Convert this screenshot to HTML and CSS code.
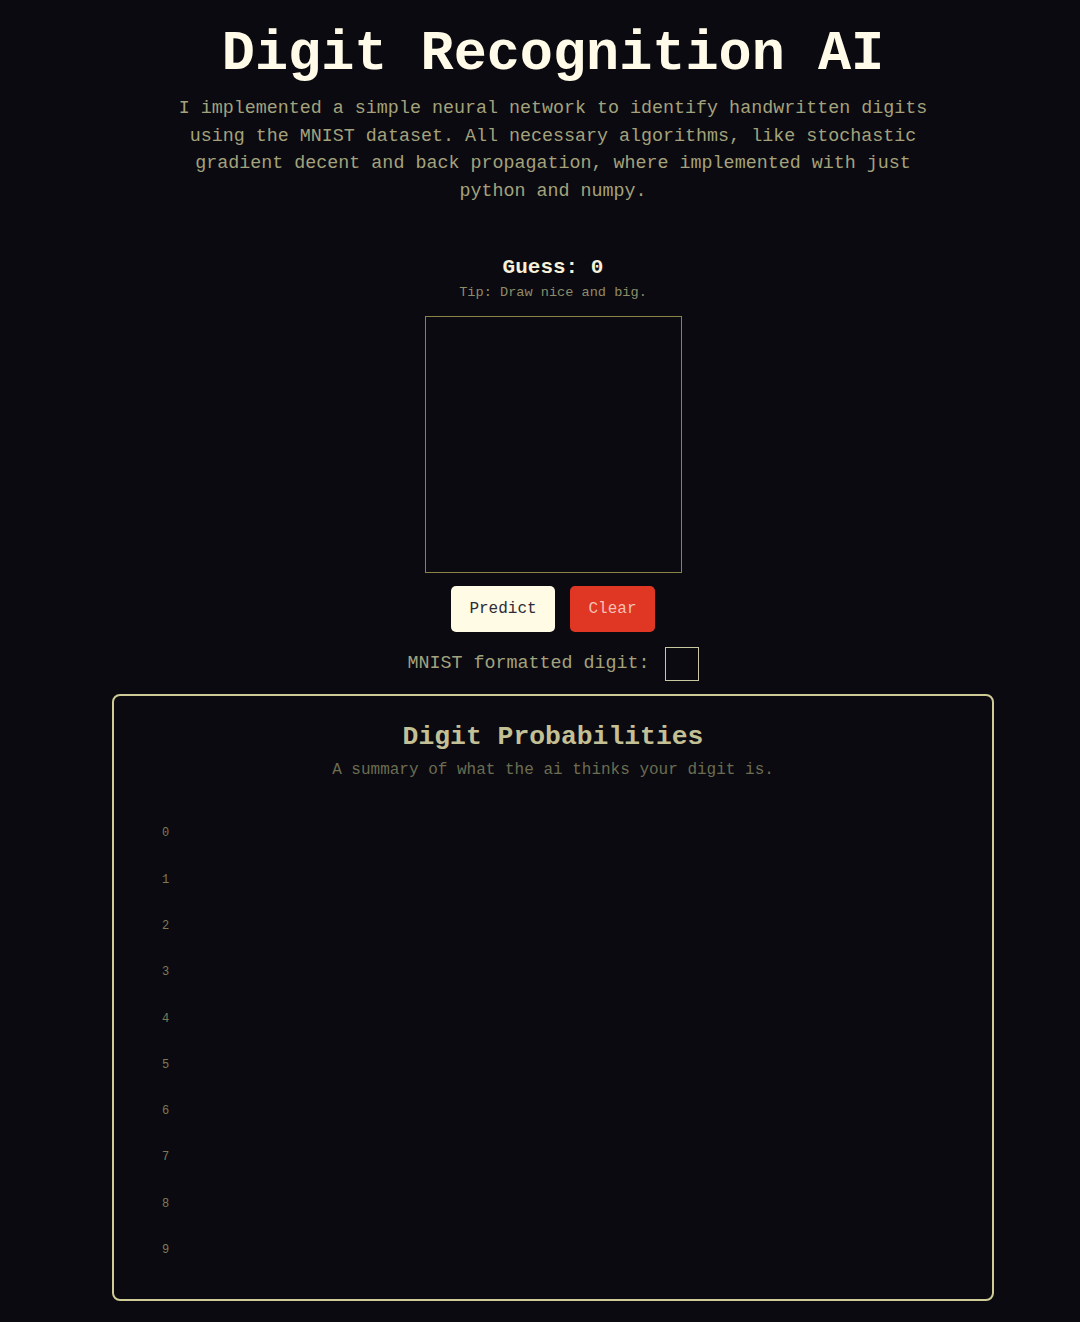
FILE: index.html
```html
<!DOCTYPE html>
<html lang="en">
<head>
<meta charset="utf-8">
<title>Digit Recognition AI</title>
<link rel="stylesheet" href="styles.css">
</head>
<body>
<main class="page">
  <h1 class="title">Digit Recognition AI</h1>
  <p class="intro">I implemented a simple neural network to identify handwritten digits using the MNIST dataset. All necessary algorithms, like stochastic gradient decent and back propagation, where implemented with just python and numpy.</p>

  <section class="draw">
    <div class="guess">Guess: 0</div>
    <div class="tip">Tip: Draw nice and big.</div>
    <div class="canvas"></div>
    <div class="buttons">
      <button class="btn btn-predict">Predict</button>
      <button class="btn btn-clear">Clear</button>
    </div>
    <div class="mnist">
      <span class="mnist-label">MNIST formatted digit:</span>
      <span class="mnist-box"></span>
    </div>
  </section>

  <section class="card">
    <h2 class="card-title">Digit Probabilities</h2>
    <p class="card-sub">A summary of what the ai thinks your digit is.</p>
    <div class="chart">
      <div class="row">0</div>
      <div class="row">1</div>
      <div class="row">2</div>
      <div class="row">3</div>
      <div class="row">4</div>
      <div class="row">5</div>
      <div class="row">6</div>
      <div class="row">7</div>
      <div class="row">8</div>
      <div class="row">9</div>
    </div>
  </section>
</main>
</body>
</html>
```

FILE: styles.css
```css
html, body {
  margin: 0;
  padding: 0;
  background: #0a0a10;
}

body {
  font-family: "Liberation Mono", "DejaVu Sans Mono", monospace;
  color: #a3a07c;
}

.page {
  width: 1080px;
  box-sizing: border-box;
  padding: 23px 0 0 26px;
  display: flex;
  flex-direction: column;
  align-items: center;
}

.title {
  margin: 0;
  font-size: 55.2px;
  line-height: 63px;
  font-weight: 700;
  color: #fffbe8;
  text-align: center;
}

.intro {
  margin: 9px 0 0;
  width: 770px;
  font-size: 18.35px;
  line-height: 27.6px;
  text-align: center;
  color: #a4a27c;
}

.draw {
  margin-top: 51px;
  display: flex;
  flex-direction: column;
  align-items: center;
}

.guess {
  font-size: 21px;
  line-height: 24px;
  font-weight: 700;
  color: #f6f1d8;
}

.tip {
  margin-top: 4px;
  font-size: 13.6px;
  line-height: 18px;
  color: #8e8c68;
}

.canvas {
  margin-top: 14px;
  width: 255px;
  height: 255px;
  border: 1px solid #8a8546;
  background: #0a0a10;
}

.buttons {
  margin-top: 13px;
  display: flex;
  gap: 15px;
}

.btn {
  height: 46px;
  padding: 0 18px;
  border: none;
  border-radius: 5px;
  font-family: "Liberation Mono", "DejaVu Sans Mono", monospace;
  font-size: 16px;
}

.btn-predict {
  background: #fffbe4;
  color: #2e2c3a;
  width: 104px;
}

.btn-clear {
  background: #e03624;
  color: #f6c0b4;
  width: 85px;
}

.mnist {
  margin-top: 15px;
  display: flex;
  align-items: center;
  gap: 15px;
}

.mnist-label {
  font-size: 18.35px;
  line-height: 24px;
  color: #a3a27e;
}

.mnist-box {
  width: 32px;
  height: 32px;
  border: 1px solid #c9c6a2;
}

.card {
  margin-top: 13px;
  width: 882px;
  height: 607px;
  box-sizing: border-box;
  border: 2px solid #cfcb96;
  border-radius: 8px;
  display: flex;
  flex-direction: column;
  align-items: center;
}

.card-title {
  margin: 25px 0 0;
  font-size: 26.4px;
  line-height: 32px;
  font-weight: 700;
  color: #c4c096;
}

.card-sub {
  margin: 7px 0 0;
  font-size: 16px;
  line-height: 20px;
  color: #6c6d52;
}

.chart {
  align-self: stretch;
  margin-top: 30px;
  padding-left: 48px;
  display: flex;
  flex-direction: column;
}

.row {
  height: 46.3px;
  line-height: 46.3px;
  font-size: 12px;
  color: #7d7b55;
}
```
